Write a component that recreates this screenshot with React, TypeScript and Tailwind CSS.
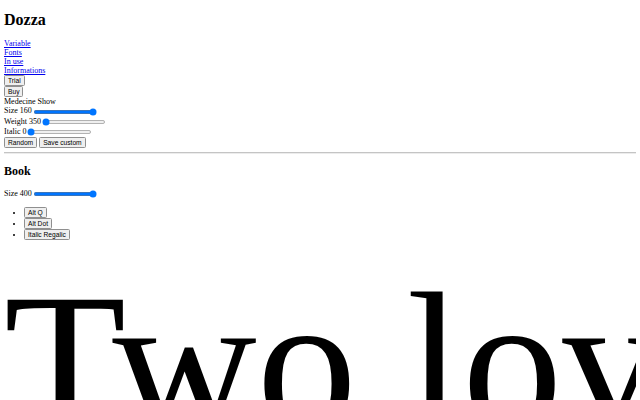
import React from "react";

const btn =
  "bg-[#efefef] border border-[#8f8f8f] rounded-[3px] px-[6px] py-[2px] text-[13.333px] leading-[normal] font-['Liberation_Sans',Arial,sans-serif] text-black";

export default function App() {
  return (
    <div className="h-[400px] w-[640px] overflow-hidden bg-white">
      <div className="[zoom:0.5] font-['Liberation_Serif','Times_New_Roman',serif] text-[16px] leading-[normal] text-black">
        <div className="m-[8px]">
          <h1 className="text-[32px] font-bold my-[21.44px]">Dozza</h1>
          <nav>
            <a href="#" className="block text-[#0000ee] underline">Variable</a>
            <a href="#" className="block text-[#0000ee] underline">Fonts</a>
            <a href="#" className="block text-[#0000ee] underline">In use</a>
            <a href="#" className="block text-[#0000ee] underline">Informations</a>
          </nav>
          <button className={btn + " block"}>Trial</button>
          <button className={btn + " block"}>Buy</button>
          <div>Medecine Show</div>
          <div>
            <label>
              Size 160
              <input type="range" min={0} max={160} defaultValue={160} className="m-[2px] align-middle" />
            </label>
          </div>
          <div>
            <label>
              Weight 350
              <input type="range" min={350} max={900} defaultValue={350} className="m-[2px] align-middle" />
            </label>
          </div>
          <div>
            <label>
              Italic 0
              <input type="range" min={0} max={1} defaultValue={0} className="m-[2px] align-middle" />
            </label>
          </div>
          <div>
            <button className={btn}>Random</button>{" "}
            <button className={btn}>Save custom</button>
          </div>
          <hr className="h-0 my-[8px] border-t border-b border-t-[#c4c4c4] border-b-[#ececec]" />
          <h2 className="text-[24px] font-bold my-[19.92px]">Book</h2>
          <div>
            <label>
              Size 400
              <input type="range" min={0} max={400} defaultValue={400} className="m-[2px] align-middle" />
            </label>
          </div>
          <ul className="list-disc pl-[40px] my-[16px]">
            <li>
              <button className={btn}>Alt Q</button>
            </li>
            <li>
              <button className={btn}>Alt Dot</button>
            </li>
            <li>
              <button className={btn}>Italic Regalic</button>
            </li>
          </ul>
          <div className="text-[400px] leading-[normal] whitespace-nowrap overflow-hidden">
            Two loves I have of comfort and despair
          </div>
        </div>
      </div>
    </div>
  );
}
